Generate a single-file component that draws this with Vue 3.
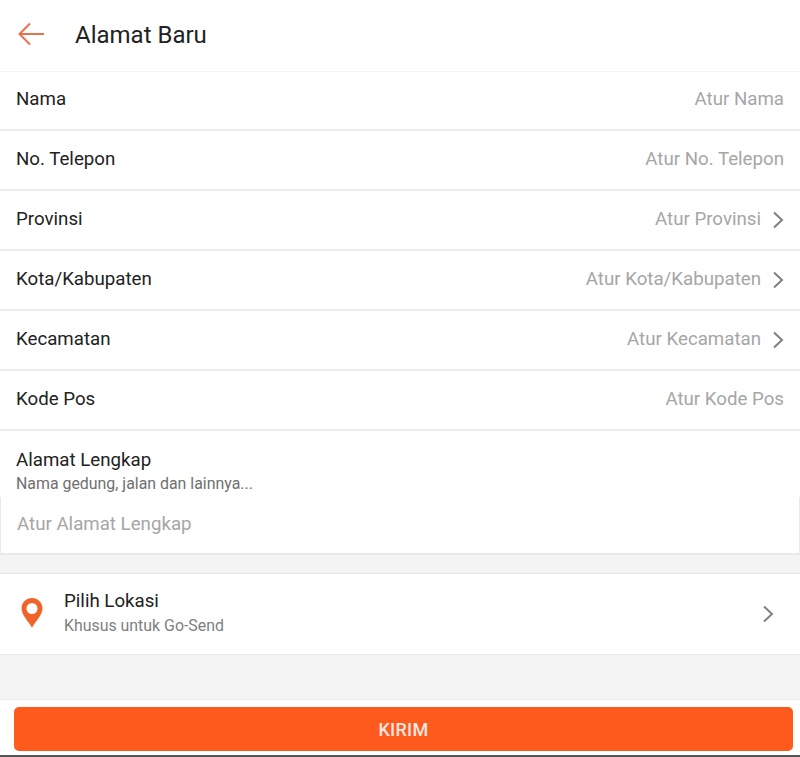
<script setup>
const rows = [
  { label: "Nama", placeholder: "Atur Nama", arrow: false },
  { label: "No. Telepon", placeholder: "Atur No. Telepon", arrow: false },
  { label: "Provinsi", placeholder: "Atur Provinsi", arrow: true },
  { label: "Kota/Kabupaten", placeholder: "Atur Kota/Kabupaten", arrow: true },
  { label: "Kecamatan", placeholder: "Atur Kecamatan", arrow: true },
  { label: "Kode Pos", placeholder: "Atur Kode Pos", arrow: false },
];
</script>

<template>
  <div class="page">
    <header class="header">
      <svg class="header__back" width="30" height="26" viewBox="0 0 30 26" fill="none">
        <path d="M27 13H3M13 2.5 2.5 13 13 23.5" stroke="#e8704a" stroke-width="2" />
      </svg>
      <h1 class="header__title">Alamat Baru</h1>
    </header>

    <ul class="form">
      <li v-for="row in rows" :key="row.label" class="form__row">
        <span class="form__label">{{ row.label }}</span>
        <span class="form__value">
          {{ row.placeholder }}
          <svg v-if="row.arrow" class="form__arrow" width="12" height="18" viewBox="0 0 12 18" fill="none">
            <path d="M2 1.5 10 9 2 16.5" stroke="#7f7f87" stroke-width="2" />
          </svg>
        </span>
      </li>
    </ul>

    <section class="address">
      <div class="address__title">Alamat Lengkap</div>
      <div class="address__hint">Nama gedung, jalan dan lainnya...</div>
      <div class="address__input">Atur Alamat Lengkap</div>
    </section>

    <section class="location">
      <svg class="location__pin" width="24" height="32" viewBox="0 0 24 32">
        <path
          fill-rule="evenodd"
          fill="#f0642a"
          d="M12 31C9.500 25.500 1.500 18.500 1.500 11.500 1.500 5.500 6.300 1 12 1s10.500 4.500 10.500 10.500C22.500 18.500 14.500 25.500 12 31ZM12 6a5.500 5.500 0 1 0 0 11 5.500 5.500 0 0 0 0-11Z"
        />
      </svg>
      <div class="location__text">
        <div class="location__title">Pilih Lokasi</div>
        <div class="location__hint">Khusus untuk Go-Send</div>
      </div>
      <svg class="location__arrow" width="12" height="18" viewBox="0 0 12 18" fill="none">
        <path d="M2 1.500 10 9 2 16.500" stroke="#7f7f87" stroke-width="2" />
      </svg>
    </section>

    <div class="spacer"></div>

    <footer class="footer">
      <button class="footer__submit">KIRIM</button>
    </footer>
  </div>
</template>

<style scoped>
.page {
  width: 800px;
  height: 757px;
  display: flex;
  flex-direction: column;
  background: #f4f4f4;
  font-family: Roboto, "Liberation Sans", sans-serif;
  color: #222222;
  overflow: hidden;
  border-bottom: 2px solid #555555;
  box-sizing: border-box;
}

.header {
  height: 72px;
  flex: none;
  display: flex;
  align-items: center;
  padding-left: 17px;
  padding-bottom: 4px;
  box-sizing: border-box;
  background: #ffffff;
  border-bottom: 1px solid #f5f5f5;
}

.header__back {
  flex: none;
}

.header__title {
  margin: 3px 0 0 28px;
  font-size: 24px;
  font-weight: 400;
}

.form {
  list-style: none;
  margin: 0;
  padding: 0;
  background: #ffffff;
}

.form__row {
  height: 60px;
  display: flex;
  align-items: center;
  justify-content: space-between;
  padding: 0 16px 3px;
  box-sizing: border-box;
  border-bottom: 2px solid #ececec;
  font-size: 18.7px;
}

.form__row:first-child {
  height: 59px;
}

.form__value {
  display: flex;
  align-items: center;
  color: #a6a6a6;
}

.form__arrow {
  margin-left: 11px;
  margin-top: 2px;
}

.address {
  flex: none;
  height: 124px;
  padding-top: 18px;
  box-sizing: border-box;
  background: #ffffff;
  display: flex;
  flex-direction: column;
  border-bottom: 2px solid #e9e9e9;
}

.address__title {
  padding-left: 16px;
  font-size: 18.7px;
  line-height: 23px;
}

.address__hint {
  padding-left: 16px;
  margin-top: 2px;
  font-size: 15.9px;
  line-height: 20px;
  color: #6f6f6f;
}

.address__input {
  flex: 1;
  margin-top: 3px;
  padding-left: 16px;
  padding-bottom: 3px;
  display: flex;
  align-items: center;
  font-size: 18.7px;
  color: #a6a6a6;
  border-left: 1px solid #e8e8e8;
  border-right: 1px solid #e8e8e8;
}

.location {
  flex: none;
  height: 82px;
  margin-top: 18px;
  box-sizing: border-box;
  display: flex;
  align-items: center;
  padding: 0 26px 0 20px;
  background: #ffffff;
  border-top: 1px solid #e8e8e8;
  border-bottom: 1px solid #e8e8e8;
}

.location__pin {
  margin-top: -3px;
}

.location__text {
  flex: 1;
  margin: -2px 0 0 20px;
}

.location__title {
  font-size: 18.7px;
  line-height: 22px;
}

.location__hint {
  margin-top: 4px;
  font-size: 15.9px;
  line-height: 20px;
  color: #808080;
}

.spacer {
  flex: 1;
}

.footer {
  flex: none;
  height: 56px;
  padding: 7px 7px 3px 14px;
  box-sizing: border-box;
  background: #ffffff;
  border-top: 1px solid #ebebeb;
}

.footer__submit {
  width: 100%;
  height: 44px;
  display: block;
  border: none;
  border-radius: 5px;
  background: #fe5a1e;
  color: #f5e6e0;
  font-family: inherit;
  font-size: 18px;
  font-weight: 500;
  letter-spacing: 0.3px;
}
</style>
